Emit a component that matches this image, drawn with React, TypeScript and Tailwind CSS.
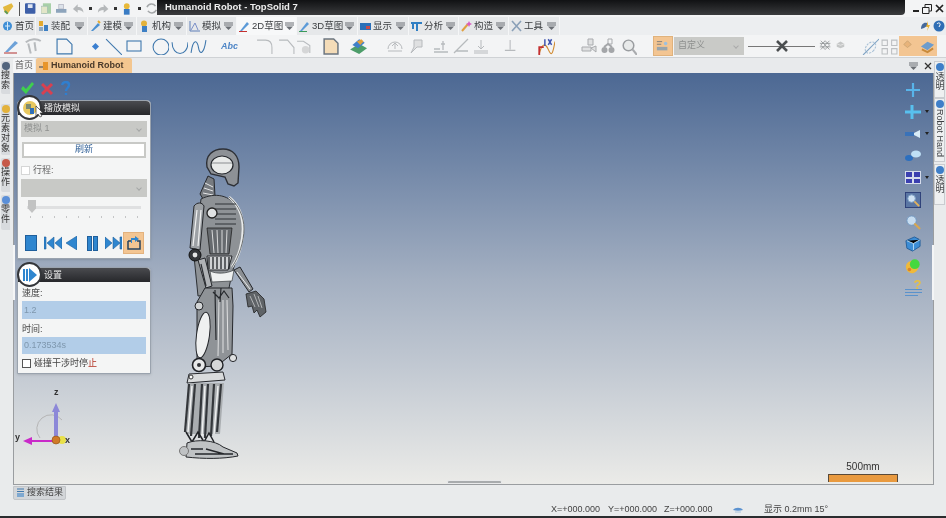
import type { ReactNode } from 'react';

function TabIcon({ children }: { children: ReactNode }) {
  return (
    <svg width="11" height="12" viewBox="0 0 11 12" fill="none" className="shrink-0">
      {children}
    </svg>
  );
}

const tabs: { label: string; w: string; menu: boolean; active?: boolean; icon: ReactNode }[] = [
  { label: '首页', w: 'w-[36px]', menu: false, icon: <><circle cx="5.500" cy="6" r="4.500" fill="#3f8ed6" /><path d="M3 6h5M5.500 2v8" stroke="#d6eaf8" /></> },
  { label: '装配', w: 'w-[52px]', menu: true, icon: <><rect x="1" y="1" width="4" height="5" fill="#e3a92e" /><rect x="6" y="5" width="4" height="6" fill="#3d7fc4" /><rect x="1" y="7" width="4" height="4" fill="#8fa8c0" /></> },
  { label: '建模', w: 'w-[49px]', menu: true, icon: <><path d="M1 11 8 3l2 2-7 6z" fill="#4a8fd0" /><path d="M8 1l2 2" stroke="#e3a92e" strokeWidth="2" /></> },
  { label: '机构', w: 'w-[50px]', menu: true, icon: <><circle cx="5" cy="3.500" r="3" fill="#e3b23c" /><rect x="3" y="6" width="5" height="6" fill="#3d7fc4" /></> },
  { label: '模拟', w: 'w-[50px]', menu: true, icon: <><path d="M1 1v10h10" stroke="#5f7fb8" /><path d="M2 10 6 3l3 7" stroke="#7a8fc8" /></> },
  { label: '2D草图', w: 'w-[60px]', menu: true, active: true, icon: <><path d="M1 11 8 2l2 2-7 7z" fill="#5b9ad8" /><path d="M0 11.500h8" stroke="#c43030" /></> },
  { label: '3D草图', w: 'w-[61px]', menu: true, icon: <><path d="M1 11 8 2l2 2-7 7z" fill="#5b9ad8" /><path d="M0 11.500h8" stroke="#3a9a5a" /></> },
  { label: '显示', w: 'w-[51px]', menu: true, icon: <><rect x="0" y="3" width="11" height="7" fill="#2a6fb8" /><rect x="6" y="6" width="4" height="3" fill="#c64a4a" /></> },
  { label: '分析', w: 'w-[50px]', menu: true, icon: <><path d="M0 2h11v2H7v7H5V4H3v5H1V4H0z" fill="#2f7fc4" /></> },
  { label: '构造', w: 'w-[50px]', menu: true, icon: <><path d="M1 11 7 4" stroke="#e0a040" strokeWidth="2" /><path d="M8 1l1 2 2 1-2 1-1 2-1-2-2-1 2-1z" fill="#d85ac0" /></> },
  { label: '工具', w: 'w-[51px]', menu: true, icon: <><path d="M1 1l9 10M10 1 1 11" stroke="#8aa0b8" strokeWidth="1.600" /></> },
];

function MenuMark() {
  return (
    <svg width="9" height="8" viewBox="0 0 9 8" className="shrink-0">
      <path d="M0 1h9M0 3h9" stroke="#6b6f75" strokeWidth="1" />
      <path d="M1 4.500h7L4.500 8z" fill="#6b6f75" />
    </svg>
  );
}

function Dot() {
  return <span className="w-[3px] h-[3px] bg-[#333] shrink-0 self-center" />;
}

function Sep() {
  return <span className="w-px h-[17px] bg-[#b9bcc0] shrink-0 self-center" />;
}

function Ico({ children, size = 16 }: { children: ReactNode; size?: number }) {
  return (
    <svg width={size} height={size} viewBox="0 0 16 16" fill="none" className="shrink-0">
      {children}
    </svg>
  );
}

const blueLine = '#3f78ad';
const greyLine = '#b7babd';

function Toolbar() {
  return (
    <div className="h-[23px] bg-[#f3f4f5] border-b border-[#cfd2d5] flex items-center shrink-0 pl-[3px]">
      <Ico><path d="M2 14 L12 3 L15 5 L5 14z" fill="#6ea2d8" /><path d="M1 15h13" stroke="#b03030" /></Ico>
      <span className="ml-[3px]"><Ico size={20}><path d="M3 5c4-3 9-3 12-1M5 6l2 8M10 5l1 7" stroke={greyLine} strokeWidth="1.600" /></Ico></span>
      <span className="ml-[1px]"><Dot /></span>
      <span className="ml-[8px]"><Sep /></span>
      <span className="ml-[5px]"><Ico size={17}><path d="M1 1h9l5 5v9H1z" stroke={blueLine} strokeWidth="1.100" /></Ico></span>
      <span className="ml-[5px]"><Dot /></span>
      <span className="ml-[15px] w-[5px] h-[5px] bg-[#3b7fd0] rotate-45 shrink-0" />
      <span className="ml-[7px]"><Ico size={17}><path d="M1 1l15 15" stroke={blueLine} /></Ico></span>
      <span className="ml-[4px]"><Ico size={16}><rect x="1" y="3" width="14" height="10" stroke={blueLine} strokeWidth="1.100" /></Ico></span>
      <span className="ml-[5px]"><Dot /></span>
      <span className="ml-[5px]"><Ico size={17}><circle cx="8.500" cy="8.500" r="7.500" stroke={blueLine} /></Ico></span>
      <span className="ml-[2px]"><Ico size={17}><path d="M1 4c0 14 15 14 15 0" stroke={blueLine} /></Ico></span>
      <span className="ml-[2px]"><Ico size={17}><path d="M1 14C3 0 7 2 8 9s5 7 7-7" stroke={blueLine} /></Ico></span>
      <span className="ml-[5px]"><Dot /></span>
      <span className="ml-[9px] w-[17px] text-[9px] italic font-bold text-[#4f86c6] leading-none shrink-0">Abc</span>
      <span className="ml-[4px]"><Dot /></span>
      <span className="ml-[7px]"><Sep /></span>
      <span className="ml-[7px]"><Ico size={17}><path d="M1 2h8c4 0 6 3 6 7v6" stroke={greyLine} /></Ico></span>
      <span className="ml-[5px]"><Ico size={17}><path d="M1 2h8l6 7v6" stroke={greyLine} /></Ico></span>
      <span className="ml-[1px]"><Ico size={17}><path d="M1 3h6l6 4v7" stroke={greyLine} /><circle cx="9" cy="11" r="3.500" fill="#d5d6d7" /></Ico></span>
      <span className="ml-[5px]"><Dot /></span>
      <span className="ml-[4px]"><Ico size={17}><path d="M2 1h9l4 4v10H2z" fill="#f4dcb8" stroke="#6c7680" strokeWidth="1.400" /></Ico></span>
      <span className="ml-[3px]"><Dot /></span>
      <span className="ml-[7px]"><Ico size={18}><path d="M1 11 9 6l7 4-7 5z" fill="#4d9d6a" /><path d="M3 7l6-5 5 3-6 5z" fill="#3f7fc8" /><path d="M7 4l4-2 2 2-3 3z" fill="#e0a040" /></Ico></span>
      <span className="ml-[4px]"><Dot /></span>
      <span className="ml-[7px]"><Sep /></span>
      <span className="ml-[9px]"><Ico size={16}><path d="M1 11a7 7 0 0 1 14 0M1 13h14M8 11V5M5 8l3-3 3 3" stroke={greyLine} /></Ico></span>
      <span className="ml-[5px]"><Ico size={16}><path d="M6 2h8v7H9l-6 6 3-6z" fill="#dfe0e1" stroke={greyLine} /></Ico></span>
      <span className="ml-[4px]"><Sep /></span>
      <span className="ml-[5px]"><Ico size={16}><path d="M1 14h14M1 11h6M10 3v9M8 6h4" stroke={greyLine} strokeWidth="1.300" /></Ico></span>
      <span className="ml-[4px]"><Ico size={16}><path d="M1 15 15 1M3 13h12" stroke={greyLine} strokeWidth="1.300" /></Ico></span>
      <span className="ml-[4px]"><Ico size={16}><path d="M1 13h14M1 15h14M8 2v9M5 8l3 3 3-3" stroke={greyLine} /></Ico></span>
      <span className="ml-[3px]"><Dot /></span>
      <span className="ml-[12px]"><Ico size={14}><path d="M7 1v11M1 13h12" stroke={greyLine} strokeWidth="1.200" /></Ico></span>
      <span className="ml-[4px]"><Dot /></span>
      <span className="ml-[6px]"><Sep /></span>
      <span className="ml-[9px]"><Ico size={18}><path d="M2 15c2-8 5-11 8-4s4 4 6-7" stroke="#d08a30" /><path d="M2 16V9h4" stroke="#c43030" strokeWidth="1.600" /><path d="M7 2v6M10 2l3 5M13 2l-3 5" stroke="#3c52b0" strokeWidth="1.300" /></Ico></span>
      <span className="ml-[3px]"><Dot /></span>
      <span className="ml-[23px]"><Ico size={16}><path d="M7 1h5v6H7zM1 9h9v4H1zM10 10l5-2v6z" fill="#e0e1e2" stroke="#a9abae" /></Ico></span>
      <span className="ml-[3px]"><Ico size={16}><path d="M8 1h4v5H8z" stroke="#a9abae" /><circle cx="4.500" cy="12" r="3" fill="#a4a6a9" /><circle cx="11.500" cy="12" r="3" fill="#a4a6a9" /><path d="M4 9l4-3 4 3" stroke="#a4a6a9" strokeWidth="2" /></Ico></span>
      <span className="ml-[4px]"><Ico size={17}><circle cx="8" cy="7" r="5" fill="#e8eaea" stroke="#9a9da0" strokeWidth="1.400" /><path d="M12 11l4 5" stroke="#a9abae" strokeWidth="2" /></Ico></span>
      <span className="ml-[16px] w-[20px] h-[20px] bg-[#f3c592] border border-[#e0b27c] flex items-center justify-center shrink-0">
        <Ico size={14}><path d="M1 3h6M1 6h5" stroke="#777" /><rect x="1" y="9" width="12" height="4" fill="#98a4ac" /><circle cx="11" cy="5" r="2" fill="#9cc0e0" /></Ico>
      </span>
      <div className="ml-[1px] w-[70px] h-[18px] bg-[#c9cac7] flex items-center justify-between pl-[4px] pr-[6px] text-[9px] text-[#8d8f8e] shrink-0">
        <span>自定义</span>
        <span className="w-[4px] h-[4px] border-b border-r border-[#aaa] rotate-45" />
      </div>
      <div className="ml-[4px] w-[67px] flex items-center justify-center relative shrink-0">
        <span className="w-full h-px bg-[#777]" />
        <svg width="12" height="12" viewBox="0 0 12 12" className="absolute">
          <path d="M1 1l10 10M11 1 1 11" stroke="#4b4e50" strokeWidth="2.600" />
        </svg>
      </div>
      <span className="ml-[4px]"><Ico size={14}><path d="M2 2l10 10M12 2 2 12M2 7l5-5 5 5-5 5zM1 5h12M1 9h12" stroke="#8e9194" strokeWidth=".9" /></Ico></span>
      <span className="ml-[3px]"><Ico size={12}><path d="M1 5l5-3 5 3v4l-5 2-5-2z" fill="#c4c6c6" /><path d="M1 5l5 2 5-2" stroke="#eee" /></Ico></span>
      <span className="ml-[8px]"><Sep /></span>
      <span className="ml-[6px]"><Ico size={17}><path d="M1 16 16 1" stroke="#7fa3c4" /><ellipse cx="8" cy="9" rx="4" ry="6" transform="rotate(40 8 9)" stroke="#a8c0d6" strokeDasharray="2 1" /></Ico></span>
      <span className="ml-[2px]"><Ico size={17}><path d="M1 2h5v5H1zM10 2h5v5h-5zM1 10h5v5H1zM10 10h5v5h-5z" stroke="#bcbfc2" /></Ico></span>
      <span className="ml-[1px] w-[19px] h-[20px] bg-[#f3c592] flex items-center justify-center shrink-0">
        <Ico size={12}><path d="M6 1l5 5-5 4-5-4z" fill="#e8b37a" stroke="#c6a070" /></Ico>
      </span>
      <span className="w-[19px] h-[20px] bg-[#f3c592] flex items-center justify-center shrink-0">
        <Ico size={15}><path d="M1 8l7-5 7 3-7 6z" fill="#6d9ccc" /><path d="M2 11l6 3 6-4" stroke="#c98a3a" strokeWidth="2" /></Ico>
      </span>
      <span className="ml-[3px]"><Dot /></span>
    </div>
  );
}

function LeftTab({ h, label, color }: { h: string; label: string; color: string }) {
  return (
    <div className={`${h} w-[9px] bg-[#d8dbde] rounded-l-[2px] flex flex-col items-center overflow-hidden`}>
      <span className="w-[8px] h-[8px] mt-[1px] rounded-sm shrink-0" style={{ background: color }} />
      <span className="text-[9px] leading-[10px] text-[#333] text-center w-[9px] [word-break:break-all]">{label}</span>
    </div>
  );
}

function RightTab({ h, label }: { h: string; label: string }) {
  return (
    <div className={`${h} w-[11px] bg-[#eef0f1] border border-[#c9ccd0] flex flex-col items-center overflow-hidden`}>
      <span className="w-[8px] h-[8px] mt-[1px] rounded-full bg-[#3f7fc8] shrink-0" />
      <span className="[writing-mode:vertical-rl] text-[9px] leading-[10px] text-[#3c3f42] mt-[1px] whitespace-nowrap">{label}</span>
    </div>
  );
}

function PanelHeader({ title, children }: { title: string; children: ReactNode }) {
  return (
    <div className="h-[14px] bg-gradient-to-b from-[#4a4b4f] to-[#27282b] rounded-t-[4px] relative flex items-center pl-[26px] text-[9px] text-[#e8e8e8] leading-none">
      {title}
      <span className="absolute -left-[1px] -top-[6px] w-[25px] h-[25px] rounded-full bg-white border-2 border-[#34363a] flex items-center justify-center">
        {children}
      </span>
    </div>
  );
}

function FakeSelect({ h, label }: { h: string; label?: string }) {
  return (
    <div className={`${h} bg-[#c8c9c6] flex items-center justify-between pl-[3px] pr-[6px] text-[9px] text-[#8f9190]`}>
      <span>{label}</span>
      <span className="w-[4px] h-[4px] border-b border-r border-[#a5a7a6] rotate-45" />
    </div>
  );
}

function PlayerIcon({ d, w = 14 }: { d: string; w?: number }) {
  return (
    <svg width={w} height="14" viewBox={`0 0 ${w} 14`} className="shrink-0">
      <path d={d} fill="#2f86cf" stroke="#1f5f9c" strokeWidth=".6" />
    </svg>
  );
}

function PlayPanel() {
  return (
    <div className="w-[134px] h-[159px] bg-[#f4f5f5] border border-[#9aa3ae] rounded-t-[4px] shrink-0 shadow-sm">
      <PanelHeader title="播放模拟">
        <svg width="16" height="16" viewBox="0 0 16 16">
          <circle cx="8" cy="8" r="7" fill="#e8c860" />
          <rect x="4" y="4" width="5" height="5" fill="#7d8a70" />
          <rect x="8" y="8" width="4" height="6" fill="#2f6fb8" />
        </svg>
      </PanelHeader>
      <div className="px-[3px]">
        <div className="mt-[6px]"><FakeSelect h="h-[16px]" label="模拟 1" /></div>
        <div className="mt-[5px] mx-[1px] h-[16px] border-2 border-[#c8c9c6] flex items-center justify-center text-[9px] text-[#2f5f96] bg-white">刷新</div>
        <div className="mt-[8px] flex items-center h-[9px] gap-[3px] text-[9px] text-[#666]">
          <span className="w-[9px] h-[9px] bg-white border border-[#d5d6d6]" />
          行程:
        </div>
        <div className="mt-[4px]"><FakeSelect h="h-[18px]" /></div>
        <div className="mt-[3px] h-[14px] relative flex items-center px-[6px]">
          <span className="w-full h-[3px] bg-[#dfe0e1]" />
          <span className="absolute left-[7px] top-0 w-[8px] h-[13px] bg-[#c2c3c3] [clip-path:polygon(0_0,100%_0,100%_65%,50%_100%,0_65%)]" />
        </div>
        <div className="mt-[2px] mx-[9px] flex justify-between">
          {Array.from({ length: 10 }).map((_, i) => (
            <span key={i} className="w-px h-[2px] bg-[#c4c5c6]" />
          ))}
        </div>
        <div className="mt-[14px] flex items-center pl-[4px]">
          <span className="w-[12px] h-[16px] bg-[#2f86cf] border border-[#1f5f9c]" />
          <span className="ml-[7px]"><PlayerIcon w={18} d="M0 1h2v12H0zM10 1v12L3 7zM18 1v12l-7-6z" /></span>
          <span className="ml-[4px]"><PlayerIcon w={11} d="M11 0v14L0 7z" /></span>
          <span className="ml-[10px] flex gap-[1px]">
            <span className="w-[5px] h-[15px] bg-[#2f86cf] border border-[#1f5f9c]" />
            <span className="w-[5px] h-[15px] bg-[#2f86cf] border border-[#1f5f9c]" />
          </span>
          <span className="ml-[7px]"><PlayerIcon w={17} d="M0 1v12l7-6zM8 1v12l7-6zM15 1h2v12h-2z" /></span>
          <span className="ml-[1px] w-[21px] h-[22px] bg-[#f3c592] border border-[#e3b27e] flex items-center justify-center">
            <svg width="16" height="16" viewBox="0 0 16 16">
              <path d="M2 6h4M11 6h3v8H2V6" fill="none" stroke="#27435f" strokeWidth="1.500" />
              <path d="M9 1l4 3-4 3V5H6v3H5V3h4z" fill="#2f86cf" />
            </svg>
          </span>
        </div>
      </div>
    </div>
  );
}

function SettingsPanel() {
  return (
    <div className="w-[134px] h-[107px] mt-[8px] bg-[#f4f5f5] border border-[#9aa3ae] rounded-t-[4px] shrink-0 shadow-sm">
      <PanelHeader title="设置">
        <svg width="16" height="14" viewBox="0 0 16 14">
          <path d="M1 1h2v12H1zM4 1h2v12H4zM7 0l8 7-8 7z" fill="#2f86cf" />
        </svg>
      </PanelHeader>
      <div className="px-[4px] text-[9px] text-[#444] leading-none">
        <div className="mt-[7px]">速度:</div>
        <div className="mt-[3px] h-[18px] bg-[#b2cde8] flex items-center pl-[2px] text-[#7e97ad]">1.2</div>
        <div className="mt-[6px]">时间:</div>
        <div className="mt-[3px] h-[17px] bg-[#b2cde8] flex items-center pl-[2px] text-[#7e97ad]">0.173534s</div>
        <div className="mt-[5px] flex items-center gap-[3px]">
          <span className="w-[9px] h-[9px] bg-white border border-[#555]" />
          <span>碰撞干涉时停<span className="text-[#b03020]">止</span></span>
        </div>
      </div>
    </div>
  );
}

function Robot() {
  const shins = [
    [188, 384, 184, 432], [194, 384, 190, 436], [201, 384, 198, 438], [207, 384, 204, 438], [213, 384, 210, 436], [220, 384, 216, 432],
  ];
  const ribs = [204, 209, 214, 219, 224];
  const teeth = [208, 212, 216, 220, 224, 228];
  return (
    <svg width="100" height="320" viewBox="170 145 100 320" className="absolute left-[157px] top-[72px]">
      {/* head */}
      <path d="M206 167c-2-12 6-18 16-18s16 7 16 18l-1 16-4 3-6-2-3-7-14-3z" fill="#8d9196" stroke="#2d3036" strokeWidth="1.400" />
      <ellipse cx="221" cy="165" rx="11" ry="9" fill="#e8eae9" stroke="#24272c" strokeWidth="1.200" />
      <path d="M211 163h20" stroke="#8a8d90" />
      {/* neck */}
      <path d="M207 176l6 3 1 17-10 6-5-8z" fill="#777b80" stroke="#26282c" />
      <path d="M204 183l8 4M203 188l9 3M202 193l10 2" stroke="#e6e7e8" />
      {/* torso */}
      <path d="M200 199c14-7 29-4 37 9 6 10 7 32 1 43l-7 22-4 20-30 3-4-40z" fill="#8e9296" stroke="#2c2f33" strokeWidth="1" />
      <path d="M228 197c10 8 14 20 14 32s-4 28-11 38" fill="none" stroke="#e9ebeb" strokeWidth="2.600" />
      <path d="M228 197c10 8 15 20 15 32s-5 28-12 38" fill="none" stroke="#3a3d41" strokeWidth=".7" />
      {ribs.map(y => (
        <path key={y} d={`M214 ${y}h21`} stroke="#2f3236" strokeWidth="1" />
      ))}
      <circle cx="211" cy="213" r="5" fill="#dfe1e2" stroke="#222" strokeWidth="1.300" />
      <path d="M206 228h25l-3 26h-19z" fill="#666a6e" stroke="#222" strokeWidth=".8" />
      <path d="M211 230l2 23M216 230l1 23M221 230v23M226 230l-1 23" stroke="#d9dadb" />
      <path d="M206 256h25l-4 14h-20z" fill="#cfd1d3" stroke="#26282c" />
      {teeth.map(x => (
        <path key={x} d={`M${x} 257v12`} stroke="#202226" strokeWidth="1.300" />
      ))}
      {/* arm */}
      <path d="M193 206c3-4 8-4 10 0l-4 44-10-2z" fill="#9da1a5" stroke="#25272b" />
      <path d="M196 210l-4 36M200 210l-3 36" stroke="#f0f1f1" strokeWidth="1.200" />
      <circle cx="194" cy="255" r="6" fill="#33363a" stroke="#111" />
      <circle cx="194" cy="255" r="2.400" fill="#e4e5e6" />
      <path d="M197 260l8 28 6-2-7-28z" fill="#b0b3b6" stroke="#25272b" />
      <path d="M200 264l5 22" stroke="#2c2f33" strokeWidth="1.200" />
      {/* belly and forearm */}
      <path d="M209 271c6 3 16 3 24-1l-2 11-20 1z" fill="#eef0f0" stroke="#3a3d41" strokeWidth=".7" />
      <path d="M233 270l15 22 4-3-13-22z" fill="#8b8f93" stroke="#25272b" />
      <path d="M236 272l13 17" stroke="#e9eaeb" />
      {/* hand */}
      <path d="M245 294l10-3 8 8 2 13-6 5-3-7-3 3-2-7-4 1z" fill="#5f6367" stroke="#222" strokeWidth=".8" />
      <path d="M249 296l5 11M253 294l5 13M257 296l4 12" stroke="#d6d7d8" strokeWidth=".7" />
      {/* thigh */}
      <path d="M196 302l8-14 27 0 1 18-1 48-15 12-20 1z" fill="#8f9397" stroke="#25272b" />
      <ellipse cx="202" cy="335" rx="6.500" ry="23" transform="rotate(8 202 335)" fill="#eff0f0" stroke="#25272b" />
      <circle cx="198" cy="306" r="4" fill="#d2d4d5" stroke="#25272b" />
      <path d="M218 300l-1 56M222 300v53M226 300l1 50" stroke="#e1e2e3" />
      <path d="M214 290l1 50M220 288l-1 14M212 292l6 6 5-7 5 7" stroke="#25282c" strokeWidth="1.200" fill="none" />
      <circle cx="232" cy="358" r="3.600" fill="#dfe1e2" stroke="#25272b" />
      {/* knees */}
      <circle cx="198" cy="365" r="6.500" fill="#e7e8e9" stroke="#1f2125" strokeWidth="1.600" />
      <circle cx="198" cy="365" r="2" fill="#303236" />
      <circle cx="216" cy="365" r="6" fill="#d5d7d8" stroke="#1f2125" strokeWidth="1.400" />
      <path d="M188 374l34-2 2 8-38 3z" fill="#d9dbdc" stroke="#26282c" />
      <circle cx="190" cy="377" r="2" fill="#fff" stroke="#333" />
      {/* shins */}
      <path d="M188 383h35l-4 51h-34z" fill="#a9adb0" />
      {shins.map(([x1, y1, x2, y2]) => (
        <path key={x1} d={`M${x1} ${y1}L${x2} ${y2}`} stroke="#34373b" strokeWidth="2.200" />
      ))}
      <path d="M191 386l-4 46M204 386l-3 50M217 386l-4 48" stroke="#f0f1f1" strokeWidth="1.400" />
      {/* ankle and foot */}
      <path d="M185 432l6 10 6-10 6 10 5-9 5 9" fill="none" stroke="#202226" strokeWidth="1.500" />
      <path d="M186 443c10-4 28-3 36 4l14 6 1 3c-15 3-34 3-52 1z" fill="#bfc2c4" stroke="#25272b" />
      <path d="M194 454h38M205 449l18 5M190 449h12" stroke="#25272b" strokeWidth="1.400" />
      <circle cx="183" cy="451" r="4.500" fill="#bfc2c4" stroke="#777" />
    </svg>
  );
}

function SideMark() {
  return <span className="absolute -right-[7px] top-[6px] w-0 h-0 border-x-[2px] border-x-transparent border-t-[3px] border-t-[#222]" />;
}

function RightIcons() {
  return (
    <div className="absolute right-[9px] top-[9px] w-[22px] flex flex-col items-center gap-[6px]">
      <svg width="16" height="16" viewBox="0 0 16 16"><path d="M8 1v14M1 8h14" stroke="#58b4ea" strokeWidth="2.200" /></svg>
      <span className="relative h-[16px]">
        <svg width="18" height="16" viewBox="0 0 18 16"><path d="M8 1v14M1 8h16" stroke="#58c0ee" strokeWidth="3" /></svg>
        <SideMark />
      </span>
      <span className="relative h-[16px]">
        <svg width="18" height="16" viewBox="0 0 18 16"><path d="M1 6h9v4H1z" fill="#3a72b8" /><path d="M10 7l6-3v8l-6-3z" fill="#d8ecf8" /></svg>
        <SideMark />
      </span>
      <svg width="18" height="16" viewBox="0 0 18 16"><ellipse cx="5" cy="10" rx="4" ry="3" fill="#2c6fbf" /><ellipse cx="12" cy="6" rx="5" ry="3.600" fill="#bfe0f6" /></svg>
      <span className="relative h-[16px]">
        <svg width="18" height="16" viewBox="0 0 18 16"><rect x="1" y="1" width="16" height="13" fill="#d5dcec" /><path d="M2 2h6v5H2zM10 2h6v5h-6zM2 9h6v4H2zM10 9h6v4h-6z" fill="#3a3fb0" /></svg>
        <SideMark />
      </span>
      <svg width="16" height="16" viewBox="0 0 17 17"><rect x=".5" y=".5" width="16" height="16" fill="#5a76a4" stroke="#2d3f78" /><circle cx="7" cy="7" r="4" fill="#cfe2f3" stroke="#7fa2c6" /><path d="M10 10l5 5" stroke="#e3b25c" strokeWidth="2" /></svg>
      <svg width="16" height="16" viewBox="0 0 17 17"><circle cx="7" cy="7" r="5" fill="#c6dcf0" stroke="#6f96c0" /><path d="M10 10l6 6" stroke="#d9a850" strokeWidth="2.200" /></svg>
      <svg width="16" height="16" viewBox="0 0 17 17"><path d="M1 5l9-4 6 3v7l-8 5-6-3z" fill="#3c8dd6" stroke="#255f9a" /><path d="M2 5l7 3 7-4M9 8v7" stroke="#b7dcf5" /></svg>
      <svg width="16" height="16" viewBox="0 0 18 18"><ellipse cx="8" cy="10" rx="7" ry="7" transform="rotate(30 8 10)" fill="#f0b93a" /><circle cx="11" cy="7" r="5.500" fill="#45d83e" /><circle cx="5" cy="13" r="2" fill="#d8852a" /></svg>
      <span className="relative h-[16px] w-[17px] flex flex-col justify-end gap-[2px]">
        <span className="absolute right-0 -top-[2px] text-[13px] leading-[14px] font-bold text-[#e8c040]">?</span>
        <span className="h-px w-full bg-[#5a92cc]" />
        <span className="h-px w-full bg-[#5a92cc]" />
        <span className="h-px w-[13px] bg-[#5a92cc]" />
      </span>
    </div>
  );
}

function Triad() {
  return (
    <div className="absolute left-0 bottom-[26px] w-[70px] h-[70px] text-[9px] font-bold text-[#333] leading-[10px]">
      <svg width="70" height="70" viewBox="0 -8 70 70">
        <path d="M26 42a14 14 0 0 1 22-18" fill="none" stroke="#b5b5b5" strokeWidth="1" />
        <path d="M40 44V16h-2l4-9 4 9h-2v28z" fill="#8c88d8" />
        <path d="M42 46H18v3l-9-4 9-4v3h24z" fill="#c92ac9" />
        <circle cx="48" cy="44" r="4" fill="#e8e04a" />
        <circle cx="42" cy="44" r="4" fill="#d07a28" stroke="#8c4f18" strokeWidth=".6" />
      </svg>
      <span className="absolute left-[40px] top-[-1px]">z</span>
      <span className="absolute left-[1px] top-[44px]">y</span>
      <span className="absolute left-[51px] top-[47px]">x</span>
    </div>
  );
}

export default function App() {
  return (
    <div className="w-[946px] h-[518px] overflow-hidden flex flex-col bg-[#e9ebec] text-[#333] blur-[0.4px] font-['Liberation_Sans','Noto_Sans_CJK_SC',sans-serif]">
      {/* title bar */}
      <div className="h-[17px] shrink-0 flex bg-[#f3f4f5]">
        <div className="w-[157px] flex items-center pl-[2px] gap-[5px]">
          <svg width="13" height="13" viewBox="0 0 13 13"><path d="M1 5l9-4 2 3-6 8-3-1z" fill="#e3b93f" /><path d="M3 9l3 3" stroke="#5a9a5a" strokeWidth="2" /></svg>
          <span className="w-px h-[14px] bg-[#555]" />
          <svg width="11" height="11" viewBox="0 0 11 11"><rect width="11" height="11" rx="1" fill="#3d5fa8" /><rect x="3" y="1" width="5" height="4" fill="#dfe6f3" /></svg>
          <svg width="11" height="11" viewBox="0 0 11 11"><rect x="2" y="0" width="9" height="11" fill="#a8d0a8" /><rect y="3" width="7" height="8" fill="#e2e6c8" stroke="#8aa" strokeWidth=".5" /></svg>
          <svg width="11" height="11" viewBox="0 0 11 11"><rect y="6" width="11" height="4" fill="#8da4bc" /><rect x="3" y="1" width="5" height="5" fill="#dde3ea" stroke="#99a" strokeWidth=".5" /></svg>
          <svg width="13" height="11" viewBox="0 0 13 11"><path d="M1 6l5-5v3c4 0 6 2 6 6-1-2-3-3-6-3v3z" fill="#b5b8ba" /></svg>
          <Dot />
          <svg width="13" height="11" viewBox="0 0 13 11"><path d="M12 6 7 1v3C3 4 1 6 1 10c1-2 3-3 6-3v3z" fill="#b5b8ba" /></svg>
          <Dot />
          <svg width="11" height="12" viewBox="0 0 11 12"><circle cx="5" cy="3" r="3" fill="#e8b93a" /><rect x="2" y="6" width="6" height="6" fill="#3a7cc4" /></svg>
          <Dot />
          <svg width="12" height="11" viewBox="0 0 12 11"><path d="M1 4c2-4 7-4 9-1M11 7c-2 4-7 4-9 1" fill="none" stroke="#a4a7a9" strokeWidth="1.600" /></svg>
        </div>
        <div className="w-[748px] h-[15px] bg-gradient-to-b from-[#111214] to-[#3b3c3e] rounded-br-[4px] flex items-center pl-[8px] text-[9.5px] font-bold text-[#eeeeee]">
          Humanoid Robot - TopSolid 7
        </div>
        <div className="flex-1 flex items-center justify-end pr-[2px] gap-[3px] text-[#1e2126]">
          <span className="w-[6px] h-[2px] bg-[#222] mt-[4px]" />
          <svg width="10" height="10" viewBox="0 0 10 10"><path d="M3 3V.5h6.500V7H7M.5 3.500H7v6H.5z" fill="none" stroke="#222" /></svg>
          <svg width="9" height="9" viewBox="0 0 9 9"><path d="M1 1l7 7M8 1 1 8" stroke="#222" strokeWidth="1.700" /></svg>
        </div>
      </div>

      {/* ribbon tabs */}
      <div className="h-[18px] shrink-0 flex items-center bg-[#eceef0] text-[9.5px]">
        {tabs.map(t => (
          <div key={t.label} className={`${t.w} ${t.active ? 'bg-[#f7f8f9]' : 'bg-[#e6e8ea]'} h-full flex items-center pl-[2px] pr-[3px] gap-[2px] border-r border-[#f5f6f7] shrink-0`}>
            <TabIcon>{t.icon}</TabIcon>
            <span className="flex-1 whitespace-nowrap text-[#3a3d40]">{t.label}</span>
            {t.menu && <MenuMark />}
          </div>
        ))}
        <div className="flex-1 flex justify-end items-center gap-[1px] pr-[1px]">
          <svg width="12" height="12" viewBox="0 0 12 12"><path d="M1 9c0-5 3-7 6-6v3L4 8z" fill="#46699a" /><path d="M8 1 6 7h2l-1 4 3-6H8z" fill="#e8b030" /></svg>
          <svg width="12" height="12" viewBox="0 0 12 12"><circle cx="6" cy="6" r="5.500" fill="#2f6eb5" /><path d="M4 4c1-2 4-1 3 1L6 7" stroke="#fff" fill="none" /></svg>
        </div>
      </div>

      <Toolbar />

      {/* workspace */}
      <div className="flex-1 min-h-0 flex">
        <div className="w-[13px] shrink-0 flex flex-col items-start pl-[1px] pt-[3px]">
          <LeftTab h="h-[33px]" label="搜索" color="#51647d" />
          <span className="h-[10px] shrink-0" />
          <LeftTab h="h-[51px]" label="元素对象" color="#e3b23c" />
          <span className="h-[3px] shrink-0" />
          <LeftTab h="h-[34px]" label="操作" color="#c65a4a" />
          <span className="h-[3px] shrink-0" />
          <LeftTab h="h-[35px]" label="零件" color="#5a8fd8" />
        </div>

        <div className="w-[921px] shrink-0 flex flex-col">
          <div className="h-[15px] shrink-0 flex items-end text-[9px] bg-[#e8eaec]">
            <div className="w-[22px] h-[15px] bg-[#f4f5f6] rounded-t-[2px] flex items-center justify-center text-[#555]">首页</div>
            <div className="w-[96px] h-[15px] ml-[1px] bg-[#f3c68f] rounded-t-[2px] flex items-center pl-[3px] gap-[2px] font-bold text-[#4a3a2a] whitespace-nowrap">
              <svg width="10" height="8" viewBox="0 0 10 8"><path d="M0 5h4" stroke="#666" strokeWidth="1.400" /><rect x="4" y="0" width="5" height="8" fill="#e8952a" /></svg>
              Humanoid Robot
            </div>
            <div className="flex-1 h-full flex items-center justify-end pr-[2px] gap-[6px]">
              <MenuMark />
              <svg width="8" height="8" viewBox="0 0 8 8"><path d="M1 1l6 6M7 1 1 7" stroke="#333" strokeWidth="1.300" /></svg>
            </div>
          </div>

          {/* 3d viewport */}
          <div className="relative h-[412px] shrink-0 border-l border-r border-b border-[#9a9da0] bg-gradient-to-b from-[#4c6893] via-[#a3afc1] via-50% to-[#ebebe8] pl-[3px] pt-[4px]">
            <div className="h-[23px] flex items-center gap-[6px] pl-[3px]">
              <svg width="15" height="13" viewBox="0 0 15 13"><path d="M1 7l5 5 8-10-2-2-6 7-3-3z" fill="#3fcf4e" /></svg>
              <svg width="13" height="13" viewBox="0 0 13 13"><path d="M1 2l10 10M11 2 1 12" stroke="#d84050" strokeWidth="3" /></svg>
              <svg width="11" height="15" viewBox="0 0 11 15"><path d="M2 4c1-4 7-4 7 0 0 3-3 3-3 6M6 12v2" fill="none" stroke="#2f7fd0" strokeWidth="2.400" /></svg>
            </div>
            <PlayPanel />
            <SettingsPanel />

            <Robot />
            <RightIcons />
            <Triad />

            {/* cursor over the panel icon */}
            <svg width="9" height="13" viewBox="0 0 9 13" className="absolute left-[21px] top-[32px]">
              <path d="M1 1v10l2-2 2 3 2-1-2-3h3z" fill="#fff" stroke="#333" strokeWidth=".7" />
            </svg>
            <span className="absolute -left-px top-[172px] w-[2px] h-[55px] bg-[#f4f5f6]" />
            <span className="absolute -right-px top-[172px] w-[2px] h-[55px] bg-[#f4f5f6]" />
            <span className="absolute left-[433px] bottom-0 w-[55px] h-[4px] bg-[#a8abad] border border-[#e8e9ea] rounded-t-[2px]" />

            <div className="absolute left-[814px] bottom-[2px] w-[70px] flex flex-col items-center">
              <span className="text-[10px] leading-[12px] text-[#333]">500mm</span>
              <span className="mt-[1px] w-full h-[8px] bg-[#e99a3f] border-x border-t border-[#5a4a38]" />
            </div>
          </div>

          {/* bottom bar */}
          <div className="h-[31px] shrink-0">
            <div className="w-[53px] h-[14px] mt-[1px] bg-[#d3d6d9] border border-[#c2c5c8] rounded-b-[2px] flex items-center pl-[2px] gap-[2px] text-[9px] text-[#444]">
              <svg width="9" height="10" viewBox="0 0 9 10"><path d="M1 1h7M1 3.500h7" stroke="#3f78ad" /><path d="M1 5h7v4H1z" fill="#7ea8d0" /></svg>
              搜索结果
            </div>
            <div className="mt-[3px] ml-[538px] flex items-center text-[9px] text-[#444] whitespace-nowrap">
              <span className="w-[57px]">X=+000.000</span>
              <span className="w-[56px]">Y=+000.000</span>
              <span className="w-[68px]">Z=+000.000</span>
              <svg width="12" height="8" viewBox="0 0 12 8"><path d="M1 4c2-3 8-3 10 0-3 1-7 1-10 0z" fill="#5b92d0" /><path d="M3 6h6" stroke="#a8c4de" /></svg>
              <span className="ml-[20px]">显示 0.2mm 15°</span>
            </div>
          </div>
        </div>

        <div className="w-[12px] shrink-0 flex flex-col pt-[3px]">
          <RightTab h="h-[37px]" label="透明" />
          <RightTab h="h-[64px]" label="Robot Hand" />
          <span className="h-[2px] shrink-0" />
          <RightTab h="h-[41px]" label="透明" />
        </div>
      </div>
      <div className="h-[2px] shrink-0 bg-[#2a2c2e]" />
    </div>
  );
}
